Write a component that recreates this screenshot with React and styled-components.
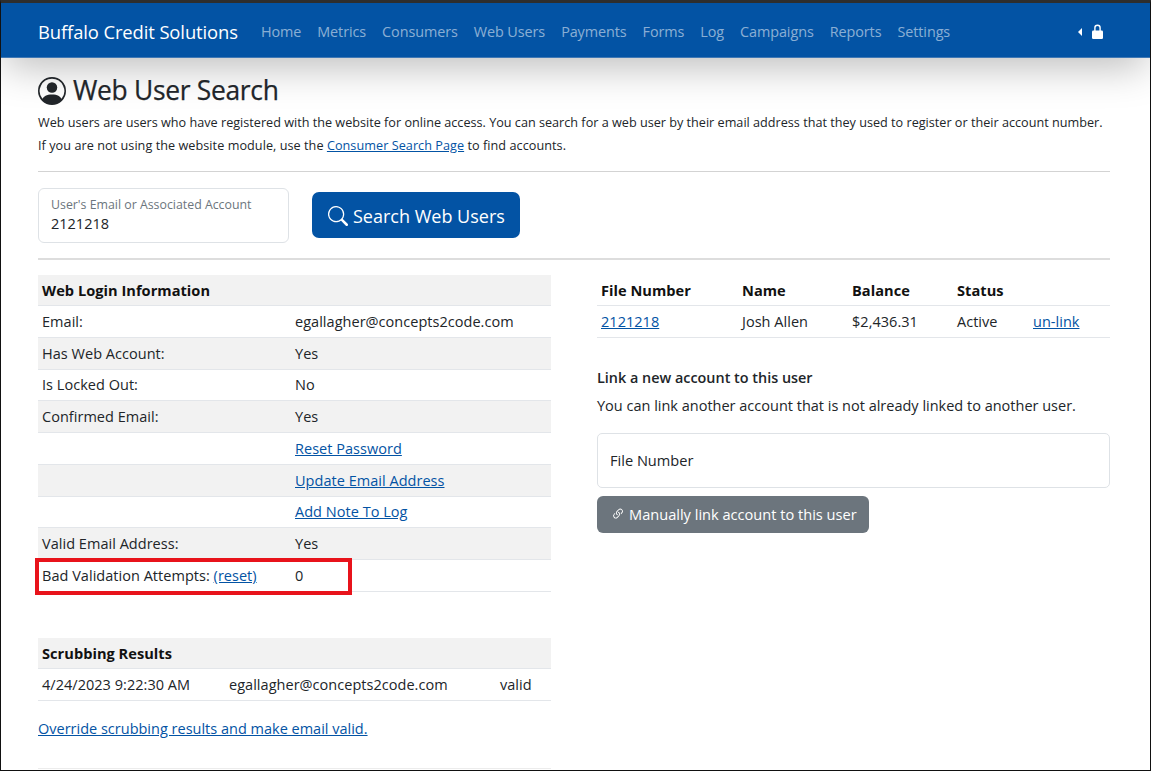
import React from "react";
import styled, { createGlobalStyle } from "styled-components";

const GlobalStyle = createGlobalStyle`
  html, body {
    margin: 0;
    padding: 0;
    background: #fff;
  }
  body {
    font-family: "Open Sans", "Noto Sans", sans-serif;
    font-size: 14.5px;
    color: #212529;
  }
  a {
    color: #0353a4;
  }
`;

const Frame = styled.div`
  box-sizing: border-box;
  width: 1151px;
  height: 771px;
  overflow: hidden;
  background: #fff;
  border-top: 3px solid #2e2e2e;
  border-left: 1px solid #111;
  border-right: 1px solid #111;
  border-bottom: 1px solid #111;
`;

const NavBar = styled.nav`
  display: flex;
  align-items: center;
  height: 55px;
  padding: 3px 0 0 37px;
  box-sizing: border-box;
  background: #0353a4;
  border-bottom: 1px solid #3f78b5;
  box-shadow: 0 12px 40px -4px rgba(0, 0, 0, 0.28);
  clip-path: inset(0 0 -80px 0);
`;

const Brand = styled.div`
  color: #fff;
  font-size: 18.4px;
  letter-spacing: -0.1px;
  margin-right: 23px;
  white-space: nowrap;
`;

const NavLinks = styled.div`
  display: flex;
  gap: 16px;
  flex: 1;
`;

const NavLink = styled.span`
  color: rgba(255, 255, 255, 0.55);
  font-size: 14.4px;
  letter-spacing: -0.08px;
  white-space: nowrap;
`;

const LockArea = styled.div`
  display: flex;
  align-items: center;
  gap: 10px;
  margin-right: 47px;
`;

const Caret = styled.span`
  width: 0;
  height: 0;
  border-top: 4px solid transparent;
  border-bottom: 4px solid transparent;
  border-right: 4px solid #fff;
`;

const Content = styled.main`
  position: relative;
  padding: 15px 40px 0 37px;
`;

const TitleRow = styled.div`
  display: flex;
  align-items: center;
  gap: 7px;
  height: 36px;
`;

const Title = styled.h1`
  margin: 0 0 2px;
  font-size: 26.4px;
  font-weight: 500;
  letter-spacing: -0.3px;
  line-height: 34px;
  color: #212529;
  -webkit-text-stroke: 0.25px #212529;
`;

const Intro = styled.div`
  margin-top: 2px;
`;

const IntroLine = styled.p`
  margin: 0;
  font-size: 12.65px;
  line-height: 23px;
  letter-spacing: ${(p) => p.$spacing || 0}px;
  white-space: nowrap;
`;

const Rule = styled.hr`
  margin: ${(p) => p.$margin};
  border: 0;
  border-top: ${(p) => p.$size || 1}px solid ${(p) => p.$color || "#d3d3d3"};
`;

const SearchRow = styled.div`
  display: flex;
  align-items: flex-start;
  gap: 23px;
`;

const FloatingField = styled.div`
  box-sizing: border-box;
  width: 251px;
  height: 55px;
  padding: 7px 12px;
  border: 1px solid #dee2e6;
  border-radius: 6px;
`;

const FieldLabel = styled.div`
  font-size: 12.35px;
  line-height: 18px;
  color: #6c757d;
`;

const FieldValue = styled.div`
  font-size: 14.5px;
  line-height: 20px;
`;

const PrimaryButton = styled.button`
  display: flex;
  align-items: center;
  gap: 5px;
  box-sizing: border-box;
  width: 208px;
  height: 46px;
  margin-top: 4px;
  padding: 1px 0 0 16px;
  border: 0;
  border-radius: 7px;
  background: #0353a4;
  color: #fff;
  font-family: inherit;
  font-size: 18px;
`;

const Columns = styled.div`
  display: grid;
  grid-template-columns: 513px 513px;
  gap: 46px;
  margin-top: 15px;
`;

const Table = styled.div`
  position: relative;
  display: grid;
  grid-template-columns: ${(p) => p.$cols};
  margin-top: ${(p) => p.$top || 0}px;
`;

const Row = styled.div`
  position: relative;
  display: grid;
  grid-template-columns: subgrid;
  grid-column: 1 / -1;
  align-items: center;
  height: ${(p) => p.$height || 31.75}px;
  box-sizing: border-box;
  padding-left: 4px;
  background: ${(p) => (p.$shaded ? "#f2f2f2" : "transparent")};
  border-bottom: 1px solid #e3e6ea;
  font-size: 14.5px;
  letter-spacing: 0.03px;
  white-space: nowrap;
`;

const HeadCell = styled.div`
  font-weight: 700;
  font-size: 14.6px;
  color: #111;
`;

const Highlight = styled.div`
  position: absolute;
  left: -3px;
  top: -2px;
  width: 317px;
  height: 37px;
  box-sizing: border-box;
  border: 4px solid #e8131b;
`;

const SubHeading = styled.div`
  margin-top: 28px;
  font-weight: 600;
  font-size: 14.4px;
  line-height: 24px;
`;

const HelpText = styled.div`
  margin-top: 4px;
  font-size: 14.5px;
  line-height: 24px;
  white-space: nowrap;
`;

const LinkField = styled.div`
  box-sizing: border-box;
  display: flex;
  align-items: center;
  height: 55px;
  margin-top: 15px;
  padding: 0 12px;
  border: 1px solid #dee2e6;
  border-radius: 5px;
  font-size: 14.6px;
`;

const SecondaryButton = styled.button`
  display: flex;
  align-items: center;
  gap: 4px;
  box-sizing: border-box;
  width: 272px;
  height: 37px;
  margin-top: 8px;
  padding: 0 0 0 14px;
  border: 0;
  border-radius: 6px;
  background: #6c757d;
  color: #fff;
  font-family: inherit;
  font-size: 14.6px;
`;

const OverrideLink = styled.a`
  display: block;
  margin-top: 16px;
  font-size: 14.5px;
  line-height: 24px;
`;

const UserIcon = () => (
  <svg width="28" height="28" viewBox="0 0 16 16" fill="#212529">
    <path d="M11 6a3 3 0 1 1-6 0 3 3 0 0 1 6 0z" />
    <path
      fillRule="evenodd"
      d="M0 8a8 8 0 1 1 16 0A8 8 0 0 1 0 8zm8-7a7 7 0 0 0-5.468 11.37C3.242 11.226 4.805 10 8 10s4.757 1.225 5.468 2.37A7 7 0 0 0 8 1z"
    />
  </svg>
);

const LockIcon = () => (
  <svg width="11" height="15" viewBox="0 0 11 15" fill="#fff">
    <path d="M2.2 7V3.8a3.3 3.3 0 0 1 6.6 0V7H7.4V3.8a1.9 1.9 0 0 0-3.8 0V7z" />
    <rect x="0" y="6.5" width="11" height="8.5" rx="1.2" />
  </svg>
);

const SearchIcon = () => (
  <svg width="20" height="20" viewBox="0 0 16 16" fill="#fff">
    <path d="M11.742 10.344a6.5 6.5 0 1 0-1.397 1.398h-.001c.03.04.062.078.098.115l3.85 3.85a1 1 0 0 0 1.415-1.414l-3.85-3.85a1.007 1.007 0 0 0-.115-.1zM12 6.5a5.5 5.5 0 1 1-11 0 5.5 5.5 0 0 1 11 0z" />
  </svg>
);

const LinkIcon = () => (
  <svg width="14" height="14" viewBox="0 0 16 16" fill="#fff">
    <path d="M4.715 6.542 3.343 7.914a3 3 0 1 0 4.243 4.243l1.828-1.829A3 3 0 0 0 8.586 5.5L8 6.086a1.002 1.002 0 0 0-.154.199 2 2 0 0 1 .861 3.337L6.88 11.45a2 2 0 1 1-2.83-2.83l.793-.792a4.018 4.018 0 0 1-.128-1.287z" />
    <path d="M6.586 4.672A3 3 0 0 0 7.414 9.5l.775-.776a2 2 0 0 1-.896-3.346L9.12 3.55a2 2 0 1 1 2.83 2.83l-.793.792c.112.42.155.855.128 1.287l1.372-1.372a3 3 0 1 0-4.243-4.243L6.586 4.672z" />
  </svg>
);

const navItems = ["Home", "Metrics", "Consumers", "Web Users", "Payments", "Forms", "Log", "Campaigns", "Reports", "Settings"];

const loginRows = [
  ["Email:", "egallagher@concepts2code.com"],
  ["Has Web Account:", "Yes"],
  ["Is Locked Out:", "No"],
  ["Confirmed Email:", "Yes"],
  ["", <a href="#reset">Reset Password</a>],
  ["", <a href="#update">Update Email Address</a>],
  ["", <a href="#note">Add Note To Log</a>],
  ["Valid Email Address:", "Yes"],
];

const App = () => (
  <Frame>
    <GlobalStyle />
    <NavBar>
      <Brand>Buffalo Credit Solutions</Brand>
      <NavLinks>
        {navItems.map((item) => (
          <NavLink key={item}>{item}</NavLink>
        ))}
      </NavLinks>
      <LockArea>
        <Caret />
        <LockIcon />
      </LockArea>
    </NavBar>
    <Content>
      <TitleRow>
        <UserIcon />
        <Title>Web User Search</Title>
      </TitleRow>
      <Intro>
        <IntroLine>
          Web users are users who have registered with the website for online access. You can search for a web user by their email address that they used to register or their account number.
        </IntroLine>
        <IntroLine $spacing={0.05}>
          If you are not using the website module, use the <a href="#consumer">Consumer Search Page</a> to find accounts.
        </IntroLine>
      </Intro>
      <Rule $margin="14px 0 16px" />
      <SearchRow>
        <FloatingField>
          <FieldLabel>User's Email or Associated Account</FieldLabel>
          <FieldValue>2121218</FieldValue>
        </FloatingField>
        <PrimaryButton>
          <SearchIcon />
          Search Web Users
        </PrimaryButton>
      </SearchRow>
      <Rule $margin="15px 0 0" $size={2} $color="#dddddd" />
      <Columns>
        <div>
          <Table $cols="257px 256px">
            <Row $shaded $height={31}>
              <HeadCell>Web Login Information</HeadCell>
            </Row>
            {loginRows.map(([label, value], i) => (
              <Row key={i} $shaded={i % 2 === 1}>
                <span>{label}</span>
                <span>{value}</span>
              </Row>
            ))}
            <Row>
              <span>
                Bad Validation Attempts: <a href="#resetcount">(reset)</a>
              </span>
              <span>0</span>
              <Highlight />
            </Row>
          </Table>
          <Table $cols="191px 271px 51px" $top={46.25}>
            <Row $shaded $height={31}>
              <HeadCell>Scrubbing Results</HeadCell>
            </Row>
            <Row>
              <span>4/24/2023 9:22:30 AM</span>
              <span>egallagher@concepts2code.com</span>
              <span>valid</span>
            </Row>
          </Table>
          <OverrideLink href="#override">Override scrubbing results and make email valid.</OverrideLink>
          <Rule $margin="27px 0 0" $color="#ececec" />
        </div>
        <div>
          <Table $cols="145px 110px 105px 76px 77px">
            <Row $height={31}>
              <HeadCell>File Number</HeadCell>
              <HeadCell>Name</HeadCell>
              <HeadCell>Balance</HeadCell>
              <HeadCell>Status</HeadCell>
              <span />
            </Row>
            <Row>
              <a href="#file">2121218</a>
              <span>Josh Allen</span>
              <span>$2,436.31</span>
              <span>Active</span>
              <a href="#unlink">un-link</a>
            </Row>
          </Table>
          <SubHeading>Link a new account to this user</SubHeading>
          <HelpText>You can link another account that is not already linked to another user.</HelpText>
          <LinkField>File Number</LinkField>
          <SecondaryButton>
            <LinkIcon />
            Manually link account to this user
          </SecondaryButton>
        </div>
      </Columns>
    </Content>
  </Frame>
);

export default App;
